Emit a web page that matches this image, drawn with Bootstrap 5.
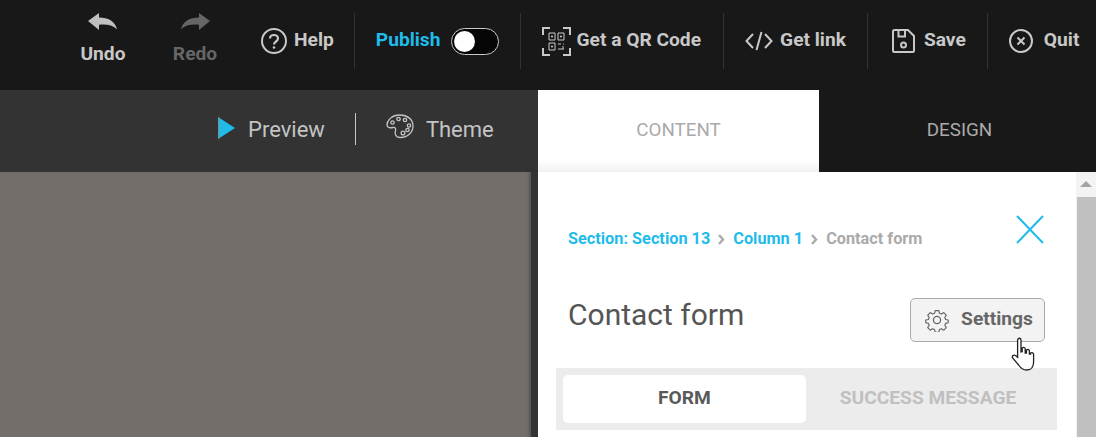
<!DOCTYPE html>
<html lang="en">
<head>
  <meta charset="UTF-8" />
  <meta name="viewport" content="width=device-width, initial-scale=1" />
  <title>Contact form editor</title>
  <link href="https://cdn.jsdelivr.net/npm/bootstrap@5.3.3/dist/css/bootstrap.min.css" rel="stylesheet">
  <style>
    html, body { height: 437px; overflow: hidden; }
    body { font-family: Roboto, "Liberation Sans", sans-serif; background: #736e69; }
    .top-bar { height: 90px; background: #181818; color: #c8c8c8; font-size: 19.2px; font-weight: 700; padding-left: 67px; }
    .hist-btn { width: 72px; height: 74px; margin-right: 20px; line-height: 21px; padding-top: 13px; }
    .hist-btn.off { color: #666; }
    .hist-btn svg { display: block; margin-bottom: 12px; }
    .bar-item { height: 56px; margin-top: 13px; padding: 0 21px; border-right: 1px solid #333; }
    .bar-item span { margin-bottom: 2px; }
    .bar-item.last { border-right: 0; padding-right: 0; }
    .help-item { padding-left: 0; padding-right: 20px; margin-left: 10px; }
    .pub-label { color: #1fbcea; margin-right: 3px; }
    .pub-toggle { width: 48px; height: 27px; border: 1px solid #c8c8c8; border-radius: 14px; background: #060606; padding: 2px; }
    .pub-knob { width: 21px; height: 21px; border-radius: 50%; background: #fff; }
    .qr-item { gap: 5px; padding-right: 22px; }
    .sub-bar { height: 82px; }
    .sub-left { width: 538px; background: #333; color: #c4c4c4; font-size: 22px; padding-left: 218px; padding-bottom: 4px; }
    .sub-sep { width: 1px; height: 32px; background: #c8c8c8; margin: 0 30px; }
    .preview-ico { margin-right: 13px; margin-bottom: 3px; }
    .theme-ico { margin-right: 12px; margin-bottom: 5px; }
    .tab-content-lnk { width: 281px; background: linear-gradient(#fff 85%, #f1f1f1); color: #aaa; font-size: 18.8px; padding-bottom: 2px; }
    .tab-design-lnk { flex: 1; background: #181818; color: #aaa; font-size: 18.8px; padding-left: 4px; padding-bottom: 2px; }
    .work-area { height: 265px; }
    .canvas-area { width: 531px; }
    .panel-edge { width: 7px; background: #333; box-shadow: -2px 0 3px rgba(0,0,0,.25); }
    .side-panel { width: 538px; background: #fff; padding: 43px 19px 0 18px; }
    .crumbs { font-size: 16.3px; font-weight: 700; color: #1fbcea; padding-left: 12px; height: 60px; padding-right: 13px; }
    .crumb-line { height: 19px; margin-top: 15px; }
    .crumbs .cur { color: #aaa; }
    .crumb-gap { margin: 0 8px; }
    .title-row { padding-left: 12px; padding-right: 12px; margin-top: 23px; height: 44px; }
    .form-title { font-size: 30px; font-weight: 400; color: #555; margin: 0 0 10px; }
    .settings-btn { width: 135px; height: 44px; padding: 0 0 2px 3px; border: 1px solid #aaa; border-radius: 5px; background: #f3f3f3; color: #666; font-weight: 700; font-size: 19.2px; }
    .settings-btn:hover { background: #f3f3f3; }
    .settings-btn svg { margin-right: 12px; margin-top: 2px; }
    .form-tabs { margin-top: 26px; height: 62px; background: #ececec; padding: 7px; }
    .form-tab { font-size: 19.2px; font-weight: 700; height: 48px; padding-bottom: 2px; }
    .form-tab.on { width: 243px; background: #fff; border-radius: 5px; color: #5a5a5a; }
    .form-tab.off { flex: 1; color: #c0c0c0; }
    .scroll-track { width: 20px; background: #f3f3f3; }
    .scroll-up { height: 25px; padding-top: 9px; }
    .scroll-arrow { width: 0; height: 0; border: 6px solid transparent; border-top: 0; border-bottom: 6px solid #a3a3a3; }
    .scroll-thumb { flex: 1; background: #c0c0c0; margin-left: 1px; }
    .hand-cursor { position: absolute; left: 1010px; top: 337px; }
  </style>
</head>
<body>

<div class="top-bar d-flex align-items-start">
  <div class="hist-btn d-flex flex-column align-items-center">
    <svg width="30" height="18" viewBox="0 0 30 20" preserveAspectRatio="none"><path d="M0 9 L11 0 V5 C20 5 27 9 29 18 C24 13 18 12 11 13 V19 Z" fill="#c0c0c0"/></svg>
    <span>Undo</span>
  </div>
  <div class="hist-btn off d-flex flex-column align-items-center">
    <svg width="30" height="18" viewBox="0 0 30 20" preserveAspectRatio="none"><path d="M30 9 L19 0 V5 C10 5 3 9 1 18 C6 13 12 12 19 13 V19 Z" fill="#666"/></svg>
    <span>Redo</span>
  </div>
  <div class="bar-item help-item d-flex align-items-center" style="gap: 7px;">
    <svg width="26" height="26" viewBox="0 0 26 26" fill="none" stroke="#c8c8c8" stroke-width="2"><circle cx="13" cy="13" r="12"/><path d="M9 10.5C9 8 11 7 13 7s4 1.300 4 3.500c0 3-4 3-4 6" stroke-width="2.200"/><circle cx="13" cy="19.500" r="1.300" fill="#c8c8c8" stroke="none"/></svg>
    <span>Help</span>
  </div>
  <div class="bar-item d-flex align-items-center gap-2">
    <span class="pub-label">Publish</span>
    <div class="pub-toggle"><div class="pub-knob"></div></div>
  </div>
  <div class="bar-item qr-item d-flex align-items-center">
    <svg width="29" height="29" viewBox="0 0 29 29" fill="none" stroke="#c8c8c8"><path d="M1 8V1h7M21 1h7v7M1 21v7h7M28 21v7h-7" stroke-width="2"/><path d="M7 6h6v7H7zM16 6h6v7h-6zM7 16h6v7H7z"/><path d="M9.500 9h1v1h-1zM18.500 9h1v1h-1zM9.500 19h1v1h-1z" stroke-width="1"/><path d="M16 17h3M21 17h1M16 22h6M21 19v3"/></svg>
    <span>Get a QR Code</span>
  </div>
  <div class="bar-item d-flex align-items-center" style="gap: 7px;">
    <svg width="28" height="20" viewBox="0 0 28 20" fill="none" stroke="#c8c8c8" stroke-width="2"><path d="M8 3 1.500 10 8 17M20 3l6.500 7L20 17M16.500 1 11.500 19"/></svg>
    <span>Get link</span>
  </div>
  <div class="bar-item d-flex align-items-center" style="gap: 9px; padding-left: 24px;">
    <svg width="23" height="24" viewBox="0 0 23 24" fill="none" stroke="#c8c8c8" stroke-width="2"><path d="M2.500 1H16l6 6v14.500a1.500 1.500 0 0 1-1.500 1.500h-18A1.500 1.500 0 0 1 1 21.500V2.500A1.500 1.500 0 0 1 2.500 1z"/><path d="M6.500 1v6.500h6.500V1"/><circle cx="11.500" cy="16" r="2.500"/></svg>
    <span>Save</span>
  </div>
  <div class="bar-item last d-flex align-items-center" style="gap: 11px;">
    <svg width="24" height="24" viewBox="0 0 24 24" fill="none" stroke="#c8c8c8" stroke-width="2"><circle cx="12" cy="12" r="11"/><path d="M8.500 8.500l7 7M15.500 8.500l-7 7"/></svg>
    <span>Quit</span>
  </div>
</div>

<div class="sub-bar d-flex">
  <div class="sub-left d-flex align-items-center">
    <svg class="preview-ico" width="17" height="22" viewBox="0 0 17 22"><path d="M0 0 17 11 0 22Z" fill="#1fbcea"/><path d="M.5 0V22" stroke="#8a8a8a"/></svg>
    <span>Preview</span>
    <div class="sub-sep"></div>
    <svg class="theme-ico" width="28" height="25" viewBox="0 0 28 25" fill="none" stroke="#c4c4c4" stroke-width="1.300"><path d="M14 1C6 1 1 6 1 11c0 3 4 3 6 2.500 2.500-.5 3 1.500 2.500 3-.8 2.500-.5 7 5 7C22 23.500 27 18 27 12 27 5 21 1 14 1z"/><circle cx="6.500" cy="8.500" r="1.700"/><circle cx="12.500" cy="5" r="1.700"/><circle cx="19" cy="6" r="1.700"/><circle cx="23" cy="11.500" r="1.700"/><circle cx="21.500" cy="16" r="1.700"/><circle cx="17" cy="19" r="1.900"/></svg>
    <span>Theme</span>
  </div>
  <div class="tab-content-lnk d-flex align-items-center justify-content-center">CONTENT</div>
  <div class="tab-design-lnk d-flex align-items-center justify-content-center">DESIGN</div>
</div>

<div class="work-area d-flex">
  <div class="canvas-area"></div>
  <div class="panel-edge"></div>
  <div class="side-panel">
    <div class="crumbs d-flex align-items-start">
      <div class="crumb-line d-flex align-items-center">
        <span>Section: Section 13</span>
        <svg class="crumb-gap" width="7" height="11" viewBox="0 0 7 11" fill="none" stroke="#aaa" stroke-width="2.400"><path d="M1 1l4 4.500-4 4.500"/></svg>
        <span>Column 1</span>
        <svg class="crumb-gap" width="7" height="11" viewBox="0 0 7 11" fill="none" stroke="#aaa" stroke-width="2.400"><path d="M1 1l4 4.500-4 4.500"/></svg>
        <span class="cur">Contact form</span>
      </div>
      <svg class="ms-auto" width="28" height="29" viewBox="0 0 28 29" fill="none" stroke="#1fbcea" stroke-width="2"><path d="M1 1l26 27M27 1 1 28"/></svg>
    </div>
    <div class="title-row d-flex justify-content-between align-items-center">
      <h1 class="form-title">Contact form</h1>
      <button class="btn settings-btn d-flex align-items-center justify-content-center">
        <svg width="24" height="24" viewBox="0 0 24 24" fill="none" stroke="#666" stroke-width="1.300" stroke-linejoin="round"><circle cx="12" cy="12" r="3.600"/><path d="M10 1.500h4l.7 3 2.200.9 2.600-1.600 2.800 2.800-1.600 2.600.9 2.200 2.900.6v3l-2.900.7-.9 2.200 1.600 2.600-2.800 2.800-2.600-1.600-2.200.9-.7 3h-4l-.7-3-2.200-.9-2.600 1.600-2.800-2.800 1.600-2.600-.9-2.200-2.900-.7v-3l2.900-.6.9-2.200-1.600-2.600 2.800-2.800 2.600 1.600 2.200-.9z" transform="translate(1.200 1.200) scale(.9)"/></svg>
        <span>Settings</span>
      </button>
    </div>
    <div class="form-tabs d-flex">
      <div class="form-tab on d-flex align-items-center justify-content-center">FORM</div>
      <div class="form-tab off d-flex align-items-center justify-content-center">SUCCESS MESSAGE</div>
    </div>
  </div>
  <div class="scroll-track d-flex flex-column">
    <div class="scroll-up d-flex justify-content-center"><div class="scroll-arrow"></div></div>
    <div class="scroll-thumb"></div>
  </div>
</div>

<svg class="hand-cursor" width="26" height="34" viewBox="0 0 26 34"><path d="M8 2c1.500-1.500 3-.5 3 1v12l1.200-.2V11c1.500-1.200 3-.5 3 1v4l1.200 0v-3c1.500-1 3-.3 3 1v3l1.200 0v-1c1.500-.8 3 0 3 1.500V25c0 4-2 8-7 8-4 0-6-2-8-5l-6-7c-1-2 1-3.500 3-2.500l2 1.800V3z" fill="#fff" stroke="#222" stroke-width="1.300"/></svg>

</body>
</html>
